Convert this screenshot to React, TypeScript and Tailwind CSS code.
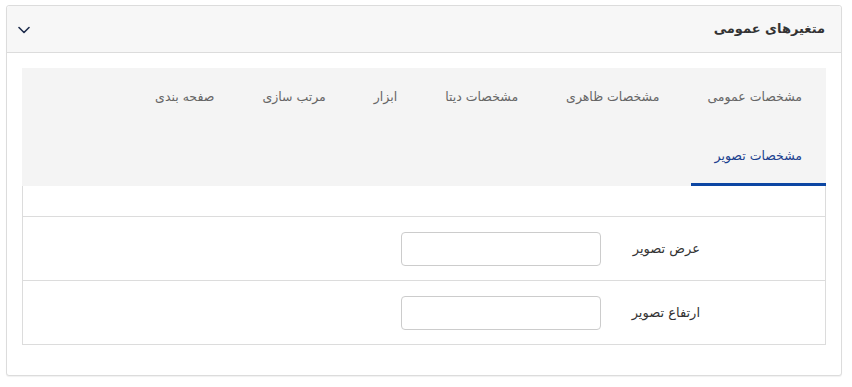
import React, { useState } from 'react';

const tabs = [
    'مشخصات عمومی',
    'مشخصات ظاهری',
    'مشخصات دیتا',
    'ابزار',
    'مرتب سازی',
    'صفحه بندی',
    'مشخصات تصویر',
];

const fields = ['عرض تصویر', 'ارتفاع تصویر'];

const App: React.FC = () => {
    const [active, setActive] = useState(6);

    return (
        <div dir="rtl" className="w-[852px] h-[387px] bg-white pt-[5px] font-['DejaVu_Sans',sans-serif]">
            <div className="ml-[6px] mr-[10px] border border-[#dcdcdc] rounded-[3px] bg-white shadow-[0_1px_1px_rgba(0,0,0,0.06)]">
                {/* header */}
                <div className="h-[47px] flex items-center justify-between pr-4 pl-[11px] bg-[#f7f7f7] border-b border-[#dcdcdc] rounded-t-[3px]">
                    <span className="text-[13px] font-bold text-[#333]">متغیرهای عمومی</span>
                    <svg width="12" height="8" viewBox="0 0 12 8" fill="none" className="mt-[1px]">
                        <path d="M1 1.5 6 6.5 11 1.5" stroke="#1f2d4d" strokeWidth="1.6" strokeLinecap="round" strokeLinejoin="round" />
                    </svg>
                </div>

                <div className="px-[15px] pt-[15px] pb-[30px]">
                    {/* tabs */}
                    <div className="flex flex-wrap bg-[#f4f4f4]">
                        {tabs.map((t, i) => (
                            <button
                                key={t}
                                onClick={() => setActive(i)}
                                className={
                                    i === active
                                        ? 'h-[59px] px-6 pt-[2px] text-[12.5px] text-[#1b3f8f] border-b-[3px] border-[#0c46a3] whitespace-nowrap'
                                        : 'h-[59px] px-6 text-[12.5px] text-[#666] whitespace-nowrap'
                                }
                            >
                                {t}
                            </button>
                        ))}
                    </div>

                    {/* panel */}
                    <div className="border-x border-b border-[#dcdcdc]">
                        <div className="h-[30px]" />
                        {fields.map((f) => (
                            <div key={f} className="h-[64px] flex items-center border-t border-[#dcdcdc] pr-[125px]">
                                <label className="w-[99px] text-[13px] text-[#333]">{f}</label>
                                <input type="text" className="w-[200px] h-[34px] border border-[#ccc] rounded-[4px] bg-white outline-none" />
                            </div>
                        ))}
                    </div>
                </div>
            </div>
        </div>
    );
};

export default App;
